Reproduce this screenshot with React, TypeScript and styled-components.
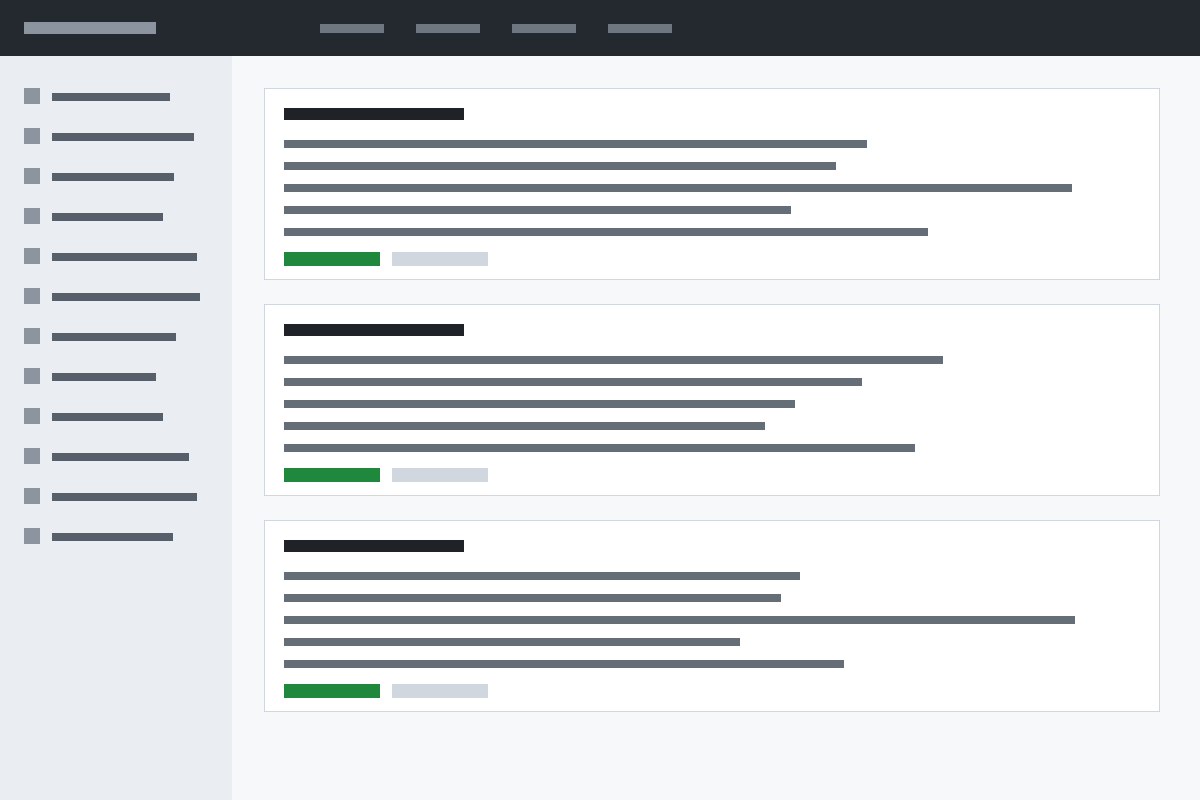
import React from "react";
import styled, { createGlobalStyle } from "styled-components";

const GlobalStyle = createGlobalStyle`
  html, body {
    margin: 0;
    padding: 0;
    height: 100%;
    font-family: "Liberation Sans", Arial, sans-serif;
    background: #f6f8fa;
  }
  #root {
    min-height: 100vh;
  }
`;

const Shell = styled.div`
  display: flex;
  flex-direction: column;
  min-height: 100vh;
`;

const TopBar = styled.header`
  height: 56px;
  flex: 0 0 56px;
  background: #24292f;
  display: flex;
  align-items: flex-start;
  padding: 0 24px;
  box-sizing: border-box;
`;

const Logo = styled.div`
  width: 132px;
  height: 12px;
  margin-top: 22px;
  background: #8c959f;
`;

const Nav = styled.nav`
  display: flex;
  gap: 32px;
  margin-left: 164px;
  margin-top: 24px;
`;

const NavLink = styled.div`
  width: 64px;
  height: 9px;
  background: #6e7781;
`;

const Body = styled.div`
  flex: 1;
  display: flex;
`;

const Sidebar = styled.aside`
  width: 232px;
  flex: 0 0 232px;
  background: #eaedf2;
  padding: 32px 24px;
  box-sizing: border-box;
  display: flex;
  flex-direction: column;
  gap: 24px;
`;

const SideItem = styled.div`
  display: flex;
  align-items: flex-start;
  gap: 12px;
  height: 16px;
`;

const SideIcon = styled.div`
  width: 16px;
  height: 16px;
  background: #8c959f;
`;

const SideLabel = styled.div<{ $w: number }>`
  width: ${(p) => p.$w}px;
  height: 8px;
  margin-top: 5px;
  background: #57606a;
`;

const Main = styled.main`
  flex: 1;
  padding: 32px;
  display: flex;
  flex-direction: column;
  gap: 24px;
`;

const Card = styled.section`
  width: 896px;
  box-sizing: border-box;
  background: #ffffff;
  border: 1px solid #d0d7de;
  padding: 19px 19px 13px;
  display: flex;
  flex-direction: column;
`;

const CardTitle = styled.div`
  width: 180px;
  height: 12px;
  background: #1f2328;
`;

const Lines = styled.div`
  display: flex;
  flex-direction: column;
  gap: 14px;
  margin-top: 20px;
`;

const Line = styled.div<{ $w: number }>`
  width: ${(p) => p.$w}px;
  height: 8px;
  background: #656d76;
`;

const Actions = styled.div`
  display: flex;
  gap: 12px;
  margin-top: 16px;
`;

const Button = styled.div<{ $primary?: boolean }>`
  width: 96px;
  height: 14px;
  background: ${(p) => (p.$primary ? "#1f883d" : "#d0d7de")};
`;

const sideItems = [118, 142, 122, 111, 145, 148, 124, 104, 111, 137, 145, 121];

const cards = [
  [583, 552, 788, 507, 644],
  [659, 578, 511, 481, 631],
  [516, 497, 791, 456, 560],
];

export default function App() {
  return (
    <>
      <GlobalStyle />
      <Shell>
        <TopBar>
          <Logo />
          <Nav>
            <NavLink />
            <NavLink />
            <NavLink />
            <NavLink />
          </Nav>
        </TopBar>
        <Body>
          <Sidebar>
            {sideItems.map((w, i) => (
              <SideItem key={i}>
                <SideIcon />
                <SideLabel $w={w} />
              </SideItem>
            ))}
          </Sidebar>
          <Main>
            {cards.map((lines, i) => (
              <Card key={i}>
                <CardTitle />
                <Lines>
                  {lines.map((w, j) => (
                    <Line key={j} $w={w} />
                  ))}
                </Lines>
                <Actions>
                  <Button $primary />
                  <Button />
                </Actions>
              </Card>
            ))}
          </Main>
        </Body>
      </Shell>
    </>
  );
}
